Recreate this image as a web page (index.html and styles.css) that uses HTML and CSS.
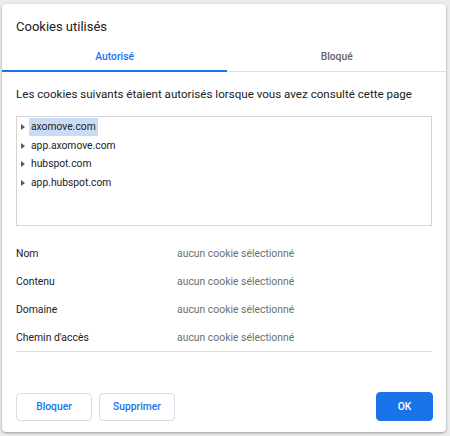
FILE: index.html
```html
<!DOCTYPE html>
<html lang="fr">
<head>
<meta charset="utf-8">
<title>Cookies utilisés</title>
<link rel="stylesheet" href="styles.css">
</head>
<body>
<div class="dialog">
  <div class="title">Cookies utilisés</div>
  <div class="tabs">
    <div class="tab active">Autorisé</div>
    <div class="tab">Bloqué</div>
  </div>
  <div class="content">
    <div class="desc">Les cookies suivants étaient autorisés lorsque vous avez consulté cette page</div>
    <div class="tree">
      <div class="item"><span class="tri"></span><span class="label selected">axomove.com</span></div>
      <div class="item"><span class="tri"></span><span class="label">app.axomove.com</span></div>
      <div class="item"><span class="tri"></span><span class="label">hubspot.com</span></div>
      <div class="item"><span class="tri"></span><span class="label">app.hubspot.com</span></div>
    </div>
    <div class="details">
      <div class="row"><span class="key">Nom</span><span class="val">aucun cookie sélectionné</span></div>
      <div class="row"><span class="key">Contenu</span><span class="val">aucun cookie sélectionné</span></div>
      <div class="row"><span class="key">Domaine</span><span class="val">aucun cookie sélectionné</span></div>
      <div class="row"><span class="key">Chemin d'accès</span><span class="val">aucun cookie sélectionné</span></div>
    </div>
  </div>
  <div class="footer">
    <div class="left">
      <button class="btn">Bloquer</button>
      <button class="btn">Supprimer</button>
    </div>
    <button class="btn primary">OK</button>
  </div>
</div>
</body>
</html>
```

FILE: styles.css
```css
html, body {
  margin: 0;
  padding: 0;
}
body {
  width: 450px;
  height: 436px;
  overflow: hidden;
  background: #ececec;
  font-family: Roboto, "Liberation Sans", Arial, sans-serif;
  color: #202124;
}
.dialog {
  margin: 4px 0 0 2px;
  width: 444px;
  height: 428px;
  box-sizing: border-box;
  background: #fff;
  border-radius: 4px;
  box-shadow: 0 1px 3px rgba(0, 0, 0, 0.35);
  display: flex;
  flex-direction: column;
}
.title {
  padding: 13px 14px 0;
  font-size: 13px;
  line-height: 20px;
  color: #202124;
}
.tabs {
  margin-top: 4px;
  display: flex;
  border-bottom: 1px solid #e0e0e0;
}
.tab {
  flex: 1 1 auto;
  text-align: center;
  font-size: 10.3px;
  font-weight: 500;
  line-height: 16px;
  padding: 8px 0 5px;
  margin-bottom: -1px;
  border-bottom: 2px solid transparent;
  color: #5f6368;
}
.tab.active {
  color: #1a73e8;
  border-bottom-color: #1a73e8;
}
.content {
  padding: 14px 14px 0;
}
.desc {
  font-size: 11.6px;
  line-height: 16px;
  color: #202124;
  white-space: nowrap;
}
.tree {
  margin-top: 14px;
  height: 110px;
  box-sizing: border-box;
  border: 1px solid #d6d6d6;
  padding-top: 1px;
}
.item {
  height: 18.5px;
  display: flex;
  align-items: center;
  font-size: 10.3px;
  color: #202124;
}
.tri {
  width: 0;
  height: 0;
  margin: 0 4px 0 4px;
  border-top: 3px solid transparent;
  border-bottom: 3px solid transparent;
  border-left: 4px solid #5a5a5a;
}
.label {
  padding: 1px 2px;
  line-height: 16px;
}
.label.selected {
  background: #c9dcf6;
}
.details {
  margin-top: 13px;
  border-bottom: 1px solid #dadce0;
}
.row {
  height: 28px;
  display: flex;
  align-items: center;
  font-size: 10.4px;
}
.key {
  width: 161px;
  color: #202124;
}
.val {
  color: #6b6e72;
}
.footer {
  margin-top: auto;
  padding: 0 13px 11px 14px;
  display: flex;
  justify-content: space-between;
  align-items: center;
}
.left {
  display: flex;
  gap: 7px;
}
.btn {
  font-family: Roboto, "Liberation Sans", Arial, sans-serif;
  font-size: 10.3px;
  font-weight: 500;
  height: 28px;
  width: 76px;
  box-sizing: border-box;
  border: 1px solid #dadce0;
  border-radius: 4px;
  background: #fff;
  color: #1a73e8;
  padding: 0;
}
.btn.primary {
  width: 57px;
  height: 29px;
  background: #1a73e8;
  border-color: #1a73e8;
  color: #fff;
}
```
